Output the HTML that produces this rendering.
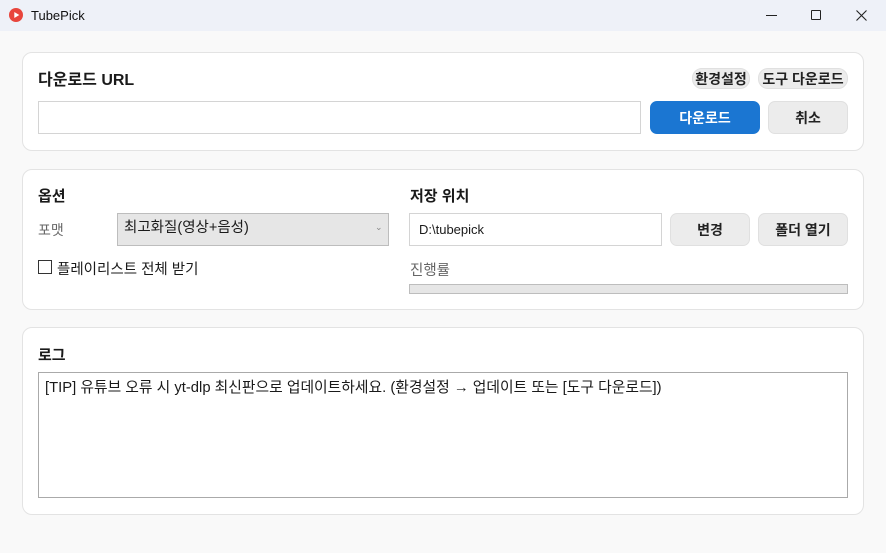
<!DOCTYPE html>
<html><head><meta charset="utf-8"><style>
*{box-sizing:border-box;margin:0;padding:0}
body{width:886px;height:553px;background:#f9f9f9;font-family:"Liberation Sans","Noto Sans CJK KR",sans-serif;color:#1a1a1a;position:relative;overflow:hidden;font-size:14px}
.a{position:absolute}
.tb{left:0;top:0;width:886px;height:31px;background:#eef1f8}
.card{background:#fff;border:1px solid #e3e3e3;border-radius:10px;left:22px;width:842px}
.h{font-weight:bold;font-size:15px;color:#1a1a1a}
.btn{background:#ececec;border:1px solid #e0e0e0;border-radius:7px;display:flex;align-items:center;justify-content:center;font-size:14px;font-weight:bold;color:#222}
.inp{background:#fff;border:1px solid #d4d4d4}
</style></head><body>
<div class="a tb"></div>
<svg class="a" style="left:9px;top:8px" width="14" height="14" viewBox="0 0 14 14"><circle cx="7" cy="7" r="7" fill="#e8453c"/><path d="M5.3 4v6l5-3z" fill="#fff"/></svg>
<div class="a" style="left:31px;top:8px;font-size:13px;color:#111">TubePick</div>
<div class="a" style="left:766px;top:15px;width:11px;height:1px;background:#222"></div>
<div class="a" style="left:811px;top:10px;width:10px;height:10px;border:1px solid #222;border-radius:1px"></div>
<svg class="a" style="left:856px;top:10px" width="11" height="11"><path d="M0.5 0.5L10.5 10.5M10.5 0.5L0.5 10.5" stroke="#222" stroke-width="1.1"/></svg>

<div class="a card" style="top:52px;height:99px"></div>
<div class="a h" style="left:38px;top:66px;font-size:16px">다운로드 URL</div>
<div class="a btn" style="left:692px;top:68px;width:58px;height:21px;border-radius:10px">환경설정</div>
<div class="a btn" style="left:758px;top:68px;width:90px;height:21px;border-radius:10px">도구 다운로드</div>
<div class="a inp" style="left:38px;top:101px;width:603px;height:33px"></div>
<div class="a btn" style="left:650px;top:101px;width:110px;height:33px;background:#1b76d2;border-color:#1b76d2;color:#fff">다운로드</div>
<div class="a btn" style="left:768px;top:101px;width:80px;height:33px">취소</div>

<div class="a card" style="top:169px;height:141px"></div>
<div class="a h" style="left:38px;top:185px">옵션</div>
<div class="a" style="left:38px;top:220px;color:#666">포맷</div>
<div class="a" style="left:117px;top:213px;width:272px;height:33px;background:#e6e6e6;border:1px solid #bdbdbd"></div>
<div class="a" style="left:124px;top:216px;font-size:14.5px">최고화질(영상+음성)</div>
<div class="a" style="left:375px;top:222px;font-size:9px;color:#888">⌄</div>
<div class="a" style="left:38px;top:260px;width:14px;height:14px;border:1px solid #333"></div>
<div class="a" style="left:57px;top:258px;font-size:14.5px">플레이리스트 전체 받기</div>
<div class="a h" style="left:410px;top:185px">저장 위치</div>
<div class="a inp" style="left:409px;top:213px;width:253px;height:33px"></div>
<div class="a" style="left:419px;top:222px;font-size:13px">D:\tubepick</div>
<div class="a btn" style="left:670px;top:213px;width:80px;height:33px">변경</div>
<div class="a btn" style="left:758px;top:213px;width:90px;height:33px">폴더 열기</div>
<div class="a" style="left:410px;top:259px;color:#666;font-size:14.5px">진행률</div>
<div class="a" style="left:409px;top:284px;width:439px;height:10px;background:#e6e6e6;border:1px solid #bdbdbd"></div>

<div class="a card" style="top:327px;height:188px"></div>
<div class="a h" style="left:38px;top:344px">로그</div>
<div class="a" style="left:38px;top:372px;width:810px;height:126px;border:1px solid #aaa;background:#fff"></div>
<div class="a" style="left:45px;top:376px;font-size:14.8px;white-space:nowrap">[TIP] 유튜브 오류 시 yt-dlp 최신판으로 업데이트하세요. (환경설정 → 업데이트 또는 [도구 다운로드])</div>
</body></html>
